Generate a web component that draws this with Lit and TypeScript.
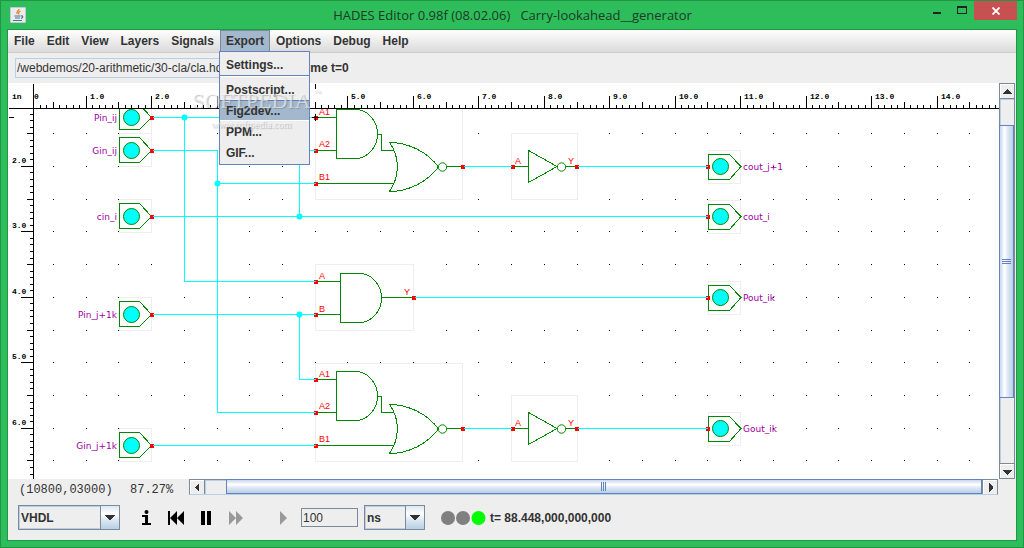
import { LitElement, html, svg, css } from "lit";
import { customElement, property, state } from "lit/decorators.js";

const UNIT = 65.4545;
const ORIGIN_X = 20.7;
const ORIGIN_Y = 35.5;
const px = (n: number) => Math.floor(ORIGIN_X + n * UNIT);
const py = (n: number) => Math.floor(ORIGIN_Y + n * UNIT);

const INPUTS: [string, number][] = [
  ["Pin_ij", 117],
  ["Gin_ij", 150],
  ["cin_i", 216],
  ["Pin_j+1k", 314],
  ["Gin_j+1k", 445],
];

const OUTPUTS: [string, number][] = [
  ["cout_j+1", 166],
  ["cout_i", 216],
  ["Pout_ik", 297],
  ["Gout_ik", 428],
];

const WIRES = [
  "M152 117H315", "M184 117V281H315", "M152 150H217V412H315", "M217 183H315",
  "M299 216V150H315", "M152 216H707", "M152 314H315", "M299 314V379H315",
  "M152 445H315", "M463 166H511", "M577 166H707", "M414 297H707",
  "M463 428H511", "M577 428H707",
];

const NODES = [[184, 117], [217, 183], [299, 216], [299, 314]];

/** Schematic sheet with rulers, grid, gates and signals. */
@customElement("schematic-canvas")
export class SchematicCanvas extends LitElement {
  static styles = css`
    :host { display: block; background: #fff; overflow: hidden; min-width: 0; }
    svg { display: block; width: 100%; height: 100%; }
    .crisp { shape-rendering: crispEdges; }
    .ink { fill: none; stroke: #000; }
    .dot { fill: #000; }
    .frame { fill: #fff; stroke: #eee; }
    .wire { fill: none; stroke: #0ff; }
    .node { fill: #0ff; }
    .gate { fill: none; stroke: #008800; }
    .lamp { fill: #0ff; stroke: #008800; }
    .pin { fill: #f00; }
    .scale { font: bold 8px "Liberation Mono", monospace; fill: #000; }
    .pinname { font: 9px "Liberation Sans", sans-serif; fill: #f00; }
    .signal { font: 9px "DejaVu Sans", sans-serif; fill: #a000a0; }
    .end { text-anchor: end; }
  `;

  private rulers() {
    const marks: string[] = ["M8 108H999", "M33 83V479", "M315 83V88", "M8 117H13"];
    const labels = [];
    for (let i = 2; i <= 149; i++) {
      const x = px(i / 10);
      if (x < 35) continue;
      marks.push(`M${x} ${i % 10 === 0 ? 95 : i % 5 === 0 ? 101 : 104}V108`);
    }
    for (let i = 12; i <= 67; i++) {
      const y = py(i / 10);
      marks.push(`M${i % 10 === 0 ? 20 : i % 5 === 0 ? 26 : 29} ${y}H33`);
    }
    for (let n = 1; n <= 14; n++)
      labels.push(svg`<text class="scale" x=${px(n) + 4} y="99">${n}.0</text>`);
    for (let n = 2; n <= 6; n++)
      labels.push(svg`<text class="scale" x="12" y=${py(n) - 3}>${n}.0</text>`);
    return svg`
      <path class="ink crisp" transform="translate(.5 .5)" d=${marks.join("")}></path>
      <text class="scale" x="12" y="99">in</text>
      <text class="scale" x="34" y="99">0</text>${labels}`;
  }

  private grid() {
    let d = "";
    for (let i = 1; i <= 29; i++)
      for (let j = 3; j <= 13; j++) d += `M${px(i / 2)} ${py(j / 2)}h1v1h-1z`;
    return svg`<path class="dot crisp" d=${d}></path>`;
  }

  private pin(x: number, y: number) {
    return svg`<rect class="pin crisp" x=${x - 1} y=${y - 2} width="4" height="4"></rect>`;
  }

  private input(name: string, y: number) {
    return svg`
      <rect class="frame crisp" x="119.5" y=${y - 16.5} width="32" height="33"></rect>
      <path class="gate crisp" d=${`M139.5 ${y - 12.5}H119.5V${y + 12.5}H139.5L151.5 ${y + 0.5}Z`}></path>
      <circle class="lamp" cx="131.5" cy=${y + 0.5} r="8"></circle>
      ${this.pin(151, y + 1)}
      <text class="signal end" x="117" y=${y + 4}>${name}</text>`;
  }

  private output(name: string, y: number) {
    return svg`
      <rect class="frame crisp" x="708.5" y=${y - 15.5} width="32" height="33"></rect>
      <path class="gate crisp" d=${`M729.5 ${y - 11.5}H708.5V${y + 13.5}H729.5L741 ${y + 0.5}Z`}></path>
      <circle class="lamp" cx="720.5" cy=${y + 0.5} r="8"></circle>
      ${this.pin(707, y + 1)}
      <text class="signal" x="743" y=${y + 4}>${name}</text>`;
  }

  private andOrInvert(y: number) {
    return svg`<g transform=${`translate(0 ${y})`}>
      <rect class="frame crisp" x="315.5" y="-15.5" width="147" height="98"></rect>
      <path class="gate crisp" d="M317 .5H336M317 33.5H336M317 66.5H394M377 17.5H381.5V33.5H394M447 49.5H462"></path>
      <path class="gate crisp" d="M336.5 -7.5H357C369 -6.5 377.5 5 377.5 17S369 40.5 357 41.5H336.5Z"></path>
      <path class="gate crisp" d="M389.5 25.5C400 40 400 59 389.5 74.5C410 74.5 428 64 438.5 50C428 36 410 25.5 389.5 25.5Z"></path>
      <circle class="gate" cx="442.5" cy="50" r="4.2"></circle>
      <text class="pinname" x="319" y="-2">A1</text>
      <text class="pinname" x="319" y="30">A2</text>
      <text class="pinname" x="319" y="63">B1</text>
      ${this.pin(315, 1)}${this.pin(315, 34)}${this.pin(315, 67)}${this.pin(462, 50)}
    </g>`;
  }

  private and(y: number) {
    return svg`<g transform=${`translate(0 ${y})`}>
      <rect class="frame crisp" x="315.5" y="-16.5" width="98" height="66"></rect>
      <path class="gate crisp" d="M317 .5H340M317 33.5H340M381 16.5H413"></path>
      <path class="gate crisp" d="M340.5 -7.5H361C373 -6.5 381.5 5 381.5 17S373 40.5 361 41.5H340.5Z"></path>
      <text class="pinname" x="319" y="-2">A</text>
      <text class="pinname" x="319" y="31">B</text>
      <text class="pinname" x="404" y="14">Y</text>
      ${this.pin(315, 1)}${this.pin(315, 34)}${this.pin(413, 17)}
    </g>`;
  }

  private inverter(y: number) {
    return svg`<g transform=${`translate(0 ${y})`}>
      <rect class="frame crisp" x="511.5" y="-32.5" width="66" height="66"></rect>
      <path class="gate crisp" d="M514 .5H528M566 .5H577M528.5 -15.5V16.5L557 .5Z"></path>
      <circle class="gate" cx="561.5" cy="1" r="4.2"></circle>
      <text class="pinname" x="515" y="-2">A</text>
      <text class="pinname" x="568" y="-2">Y</text>
      ${this.pin(512, 1)}${this.pin(576, 1)}
    </g>`;
  }

  render() {
    return html`<svg role="img" aria-label="Circuit schematic">
      <g transform="translate(-8 -83)">
        ${this.grid()}
        ${INPUTS.map(([n, y]) => this.input(n, y))}
        ${OUTPUTS.map(([n, y]) => this.output(n, y))}
        ${this.andOrInvert(117)}${this.and(281)}${this.andOrInvert(379)}
        ${this.inverter(166)}${this.inverter(428)}
        <path class="wire crisp" transform="translate(.5 .5)" d=${WIRES.join("")}></path>
        ${NODES.map(([x, y]) => svg`<circle class="node" cx=${x + 0.5} cy=${y + 0.5} r="3"></circle>`)}
        <rect fill="#fff" x="8" y="83" width="991" height="25"></rect>
        ${this.rulers()}
        <path class="ink crisp" d="M315.5 114V121M312 117.5H319"></path>
      </g>
    </svg>`;
  }
}

/** Scroll bar with arrow buttons; before / size / after are proportions of the track. */
@customElement("metal-scrollbar")
export class MetalScrollbar extends LitElement {
  @property({ type: Boolean, reflect: true }) vertical = false;
  @property({ type: Number }) before = 0;
  @property({ type: Number }) size = 1;
  @property({ type: Number }) after = 0;

  static styles = css`
    :host { display: flex; box-sizing: border-box; height: 16px; background: #eee;
      border: 1px solid #7a8a99; border-bottom-color: #b8cfe5; }
    :host([vertical]) { flex-direction: column; height: auto; width: 16px; border-color: #7a8a99; }
    button { flex: none; display: grid; place-items: center; width: 15px; padding: 0; margin: 0;
      border: 0 solid #7a8a99; background: #eee; box-shadow: inset 1px 1px #fff; }
    button svg { display: block; }
    .first { border-right-width: 1px; }
    .last { border-left-width: 1px; }
    :host([vertical]) button { width: auto; height: 15px; }
    :host([vertical]) .first { border-right-width: 0; border-bottom-width: 1px; }
    :host([vertical]) .last { border-left-width: 0; border-top-width: 1px; }
    .track { flex: 1; display: flex; min-width: 0; min-height: 0; box-shadow: inset 1px 1px #b8cfe5; }
    :host([vertical]) .track { flex-direction: column; }
    .thumb { display: grid; place-items: center; box-sizing: border-box; margin: -1px 0 0; border: 1px solid #6382bf;
      background: linear-gradient(#c8d8ea, #fff 35%, #dde8f3 60%, #b8cfe5); }
    :host([vertical]) .thumb { margin: 0 0 0 -1px;
      background: linear-gradient(90deg, #c8d8ea, #fff 35%, #dde8f3 60%, #b8cfe5); }
    .grip { display: block; }
  `;

  render() {
    const arrow = (v: string, h: string) => html`<svg width="9" height="9" viewBox="0 0 9 9" shape-rendering="crispEdges" fill="#333"><path d=${this.vertical ? v : h}></path></svg>`;
    const grip = this.vertical
      ? html`<svg class="grip" width="9" height="6" shape-rendering="crispEdges"><path d="M0 .5h9M0 2.5h9M0 4.5h9" stroke="#6382bf"></path></svg>`
      : html`<svg class="grip" width="6" height="9" shape-rendering="crispEdges"><path d="M.5 0v9M2.5 0v9M4.5 0v9" stroke="#6382bf"></path></svg>`;
    return html`
      <button class="first" aria-label="Scroll back">${arrow("M0 7L4 2h1L9 7z", "M6 0L2 4v1L6 9z")}</button>
      <div class="track">
        <div style="flex:${this.before} 0 0"></div>
        <div class="thumb" style="flex:${this.size} 0 0">${grip}</div>
        <div style="flex:${this.after} 0 0"></div>
      </div>
      <button class="last" aria-label="Scroll forward">${arrow("M0 3h9L5 8H4z", "M3 0l4 4v1L3 9z")}</button>`;
  }
}

@customElement("app-root")
export class AppRoot extends LitElement {
  @state() private open = "Export";

  static styles = css`
    :host { display: flex; flex-direction: column; box-sizing: border-box; height: 100vh;
      padding: 0 7px 7px; border: 1px solid #219645; background: #2dbd5a;
      font: 12px "Liberation Sans", Arial, sans-serif; color: #333; position: relative; }
    .title { display: grid; grid-template-columns: 1fr auto 1fr; height: 28px; margin-right: -1px; }
    .java { margin: 6px 2px; }
    h1 { margin: 0; align-self: center; white-space: pre; font: 13px "Open Sans", sans-serif; color: #1d3a26; }
    .controls { display: flex; justify-content: end; align-items: start; }
    .controls button { height: 19px; padding: 0; border: 0; background: none; display: grid; place-items: center; width: 25px; }
    .controls svg { display: block; }
    .controls .close { width: 43px; background: #c75050; }
    .body { flex: 1; display: flex; flex-direction: column; min-height: 0; border: 1px solid #219645; margin: 0 -1px -1px; background: #eee; }
    .menubar { display: flex; height: 21px; padding-bottom: 1px; border-bottom: 1px solid #ccc;
      background: linear-gradient(#fff, #dadada); }
    .menu { position: relative; }
    .menu > button { height: 21px; padding: 0 6px; border: 0; background: none; font: bold 12px "Liberation Sans", sans-serif; color: #333; }
    .menu > .active { background: #a3b8cc; box-shadow: inset 1px 1px #7a8a99, inset -1px 0 #7a8a99; }
    .popup { position: absolute; z-index: 2; top: 21px; left: -1px; width: 91px; box-sizing: border-box; padding: 2px 0 1px; border: 1px solid #6382bf; background: #eee; }
    .popup button { display: block; width: 100%; height: 21px; padding: 0 6px; border: 0; background: none; text-align: left; font: bold 12px "Liberation Sans", sans-serif; color: #333; }
    .popup .hot { background: #a3b8cc; box-shadow: inset 0 1px #6382bf, inset 0 -1px #fff; }
    .popup hr { height: 1px; margin: 0 0 2px; border: 0; border-top: 1px solid #6382bf; background: #fff; }
    .tools { display: flex; align-items: center; gap: 5px; height: 30px; padding: 0 7px; font-weight: bold; }
    .path { width: 283px; height: 20px; box-sizing: border-box; padding: 0 1px; border: 1px solid #b8cfe5; background: #eee; font: 12px "Liberation Sans", sans-serif; color: #333; }
    .sheet { flex: 1; display: flex; min-height: 0; padding-right: 1px; }
    schematic-canvas { flex: 1; }
    .status { display: flex; height: 18px; padding-right: 18px; font: 12px "Liberation Mono", monospace; align-items: start; }
    .status output { flex: none; box-sizing: border-box; line-height: 22px; padding-left: 11px; width: 111px; }
    .status .zoom { width: 70px; }
    .status metal-scrollbar { flex: 1; }
    .run { display: flex; align-items: center; height: 41px; padding: 0 0 2px 10px; font-weight: bold; }
    .combo { display: grid; grid-template-columns: 1fr 19px; height: 25px; box-sizing: border-box; border: 1px solid #7a8a99; box-shadow: inset 1px 1px #b8cfe5, inset -1px -1px #b8cfe5; }
    .combo select { grid-area: 1 / 1 / 2 / 3; appearance: none; min-width: 0; margin: 0; padding: 0 2px; border: 0; background: none; font: bold 12px "Liberation Sans", sans-serif; color: #333; }
    .combo span { grid-area: 1 / 2; pointer-events: none; display: grid; place-items: center; border-left: 1px solid #7a8a99; background: linear-gradient(#dde8f3, #fff 35%, #dde8f3 60%, #b8cfe5); }
    .lang { width: 102px; margin-right: 11px; }
    .unit { width: 61px; margin: 0 16px 0 6px; }
    .run button { width: 30px; height: 24px; padding: 0; border: 0; background: none; display: grid; place-items: center; }
    .run .step { margin-left: 17px; }
    .amount { width: 57px; height: 19px; box-sizing: border-box; margin: 0 0 0 3px; padding: 0 1px; border: 1px solid #7a8a99; background: #eee; font: 12px "Liberation Sans", sans-serif; color: #333; }
    .lights { margin-right: 4px; }
    .mark { position: absolute; z-index: 3; left: 191px; top: 87px; pointer-events: none; color: rgba(255, 255, 255, .55);
      font: 22px/26px "Liberation Serif", serif; text-shadow: 1px 1px 1px rgba(110, 110, 110, .45); text-align: center; }
    .mark small { display: block; font-size: 10px; line-height: 22px; }
    .mark sup { position: absolute; left: 122px; top: -2px; font-size: 7px; line-height: 14px; }
  `;

  private combo(cls: string, value: string, label: string) {
    return html`<div class="combo ${cls}">
      <select aria-label=${label}><option>${value}</option></select>
      <span><svg width="10" height="5" shape-rendering="crispEdges"><path d="M0 0H10L6 5H4z" fill="#333"></path></svg></span>
    </div>`;
  }

  private popup() {
    return html`<div class="popup" role="menu">
      <button role="menuitem">Settings...</button>
      <hr />
      <button role="menuitem">Postscript...</button>
      <button role="menuitem" class="hot">Fig2dev...</button>
      <button role="menuitem">PPM...</button>
      <button role="menuitem">GIF...</button>
    </div>`;
  }

  render() {
    const menus = ["File", "Edit", "View", "Layers", "Signals", "Export", "Options", "Debug", "Help"];
    return html`
      <header class="title">
        <svg class="java" width="16" height="16" viewBox="0 0 16 16">
          <rect width="16" height="16" rx="1" fill="#e8ecef" stroke="#9aa"></rect>
          <path d="M9 2C9 4 6 4.5 7 7M10.5 4C8.5 5 8 6 9 7.5" fill="none" stroke="#e8862a" stroke-width="1.3"></path>
          <path d="M4.5 9H10.5M5 11H10M3 13.5H12M11 9C13.5 8.5 13 11 11 11.5" fill="none" stroke="#4a7390" stroke-width="1.2"></path>
        </svg>
        <h1>HADES Editor 0.98f (08.02.06)   Carry-lookahead__generator</h1>
        <div class="controls">
          <button aria-label="Minimize"><svg width="8" height="13" shape-rendering="crispEdges"><rect y="8" width="8" height="2" fill="#222"></rect></svg></button>
          <button aria-label="Maximize"><svg width="10" height="9" shape-rendering="crispEdges"><path d="M0 0H10V8H0zM1 2V7H9V2z" fill="#222" fill-rule="evenodd"></path></svg></button>
          <button class="close" aria-label="Close"><svg width="8" height="8"><path d="M.5 .5L7.5 7.5M7.5 .5L.5 7.5" stroke="#fff" stroke-width="1.8"></path></svg></button>
        </div>
      </header>
      <main class="body">
        <nav class="menubar">
          ${menus.map((m) => html`<div class="menu">
            <button class=${m === this.open ? "active" : ""} @click=${() => (this.open = this.open === m ? "" : m)}>${m}</button>
            ${m === "Export" && this.open === m ? this.popup() : ""}
          </div>`)}
        </nav>
        <div class="tools">
          <input class="path" aria-label="Design file" .value=${"/webdemos/20-arithmetic/30-cla/cla.hds"} />
          <span>time t=0</span>
        </div>
        <div class="sheet">
          <schematic-canvas></schematic-canvas>
          <metal-scrollbar vertical .before=${26} .size=${273} .after=${65}></metal-scrollbar>
        </div>
        <div class="status">
          <output>(10800,03000)</output>
          <output class="zoom">87.27%</output>
          <metal-scrollbar .before=${21} .size=${757} .after=${0}></metal-scrollbar>
        </div>
        <div class="run">
          ${this.combo("lang", "VHDL", "Model")}
          <button aria-label="Info"><svg width="10" height="15"><circle cx="5.5" cy="2" r="2"></circle><path d="M1 5H7V13H10V15H1V13H4V7H1z"></path></svg></button>
          <button aria-label="Rewind"><svg width="16" height="14"><path d="M0 0H2V14H0zM9 0V14L2 7zM16 0V14L9 7z"></path></svg></button>
          <button aria-label="Pause"><svg width="10" height="14"><path d="M0 0H4V14H0zM6 0H10V14H6z"></path></svg></button>
          <button aria-label="Run"><svg width="14" height="14"><path d="M0 0L7 7L0 14zM7 0L14 7L7 14z" fill="#999"></path></svg></button>
          <button class="step" aria-label="Step"><svg width="7" height="14"><path d="M0 0L7 7L0 14z" fill="#999"></path></svg></button>
          <input class="amount" aria-label="Step time" .value=${"100"} />
          ${this.combo("unit", "ns", "Time unit")}
          <svg class="lights" width="45" height="15">
            <circle cx="7" cy="8" r="7" fill="#808080"></circle>
            <circle cx="22" cy="8" r="7" fill="#808080"></circle>
            <circle cx="37.5" cy="8" r="7" fill="#0f0"></circle>
          </svg>
          <span>t= 88.448,000,000,000</span>
        </div>
      </main>
      <div class="mark" aria-hidden="true">SOFTPEDIA<sup>™</sup><small>www.softpedia.com</small></div>
    `;
  }
}
